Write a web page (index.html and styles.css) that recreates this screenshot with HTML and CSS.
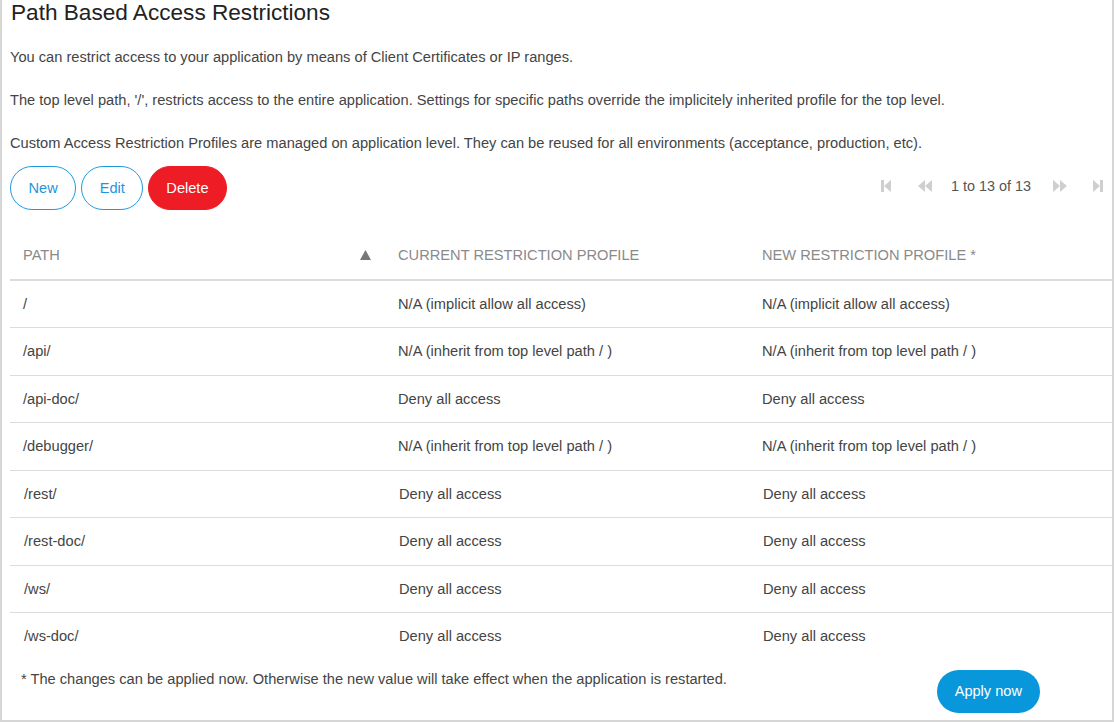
FILE: index.html
```html
<!DOCTYPE html>
<html>
<head>
<meta charset="utf-8">
<link rel="stylesheet" href="styles.css">
</head>
<body>
<div class="page">
  <h1 class="title">Path Based Access Restrictions</h1>
  <p class="text">You can restrict access to your application by means of Client Certificates or IP ranges.</p>
  <p class="text">The top level path, '/', restricts access to the entire application. Settings for specific paths override the implicitely inherited profile for the top level.</p>
  <p class="text">Custom Access Restriction Profiles are managed on application level. They can be reused for all environments (acceptance, production, etc).</p>
  <div class="toolbar">
    <div class="buttons">
      <button class="btn btn-outline">New</button>
      <button class="btn btn-outline">Edit</button>
      <button class="btn btn-danger">Delete</button>
    </div>
    <div class="pager">
      <svg class="pg pg-first" width="10" height="12" viewBox="0 0 10 12"><rect x="0" y="0" width="3" height="12"/><polygon points="10,0 10,12 3,6"/></svg>
      <svg class="pg pg-prev" width="14" height="12" viewBox="0 0 14 12"><polygon points="7,0 7,12 0,6"/><polygon points="14,0 14,12 7,6"/></svg>
      <span class="pg-text">1 to 13 of 13</span>
      <svg class="pg pg-next" width="14" height="12" viewBox="0 0 14 12"><polygon points="0,0 7,6 0,12"/><polygon points="7,0 14,6 7,12"/></svg>
      <svg class="pg pg-last" width="10" height="12" viewBox="0 0 10 12"><polygon points="0,0 7,6 0,12"/><rect x="7" y="0" width="3" height="12"/></svg>
    </div>
  </div>
  <table class="grid">
    <thead>
      <tr>
        <th class="c1"><div class="th-sort"><span>PATH</span><svg class="arrow" width="11" height="10" viewBox="0 0 11 10"><polygon points="5.5,0 11,10 0,10"/></svg></div></th>
        <th class="c2">CURRENT RESTRICTION PROFILE</th>
        <th class="c3">NEW RESTRICTION PROFILE *</th>
      </tr>
    </thead>
    <tbody>
      <tr><td class="c1">/</td><td class="c2">N/A (implicit allow all access)</td><td class="c3">N/A (implicit allow all access)</td></tr>
      <tr><td class="c1">/api/</td><td class="c2">N/A (inherit from top level path / )</td><td class="c3">N/A (inherit from top level path / )</td></tr>
      <tr><td class="c1">/api-doc/</td><td class="c2">Deny all access</td><td class="c3">Deny all access</td></tr>
      <tr><td class="c1">/debugger/</td><td class="c2">N/A (inherit from top level path / )</td><td class="c3">N/A (inherit from top level path / )</td></tr>
      <tr class="shift"><td class="c1">/rest/</td><td class="c2">Deny all access</td><td class="c3">Deny all access</td></tr>
      <tr class="shift"><td class="c1">/rest-doc/</td><td class="c2">Deny all access</td><td class="c3">Deny all access</td></tr>
      <tr class="shift"><td class="c1">/ws/</td><td class="c2">Deny all access</td><td class="c3">Deny all access</td></tr>
      <tr class="shift last"><td class="c1">/ws-doc/</td><td class="c2">Deny all access</td><td class="c3">Deny all access</td></tr>
    </tbody>
  </table>
  <div class="footer">
    <p class="note">* The changes can be applied now. Otherwise the new value will take effect when the application is restarted.</p>
    <button class="btn btn-primary">Apply now</button>
  </div>
</div>
</body>
</html>
```

FILE: styles.css
```css
html, body {
  margin: 0;
  padding: 0;
  background: #fff;
}
body {
  font-family: "Liberation Sans", Arial, sans-serif;
  color: #444;
}
.page {
  box-sizing: border-box;
  width: 1114px;
  height: 722px;
  border-left: 2px solid #d6d6d6;
  border-right: 2px solid #d6d6d6;
  border-bottom: 2px solid #d6d6d6;
  padding-left: 8px;
  overflow: hidden;
}
.title {
  margin: 0;
  font-size: 22.6px;
  line-height: 26px;
  font-weight: normal;
  color: #222;
  padding-left: 1px;
}
.text {
  margin: 23px 0 0 0;
  font-size: 14.65px;
  line-height: 16px;
  color: #444;
}
.text + .text {
  margin-top: 27px;
}
.toolbar {
  display: flex;
  align-items: center;
  justify-content: space-between;
  margin-top: 15px;
  height: 44px;
}
.buttons {
  display: flex;
  gap: 5px;
}
.btn {
  font-family: "Liberation Sans", Arial, sans-serif;
  font-size: 14.6px;
  height: 44px;
  border-radius: 22px;
  padding: 0 17px;
  cursor: pointer;
}
.btn-outline {
  background: #fff;
  border: 1px solid #1e9be0;
  color: #1e95dc;
  padding: 0 17.5px;
}
.btn-danger {
  background: #ee1c25;
  border: 1px solid #ee1c25;
  color: #fff;
  padding: 0 17px;
}
.pager {
  display: flex;
  align-items: center;
  padding-right: 9px;
  margin-top: -4px;
}
.pg {
  fill: #cfcfcf;
  display: block;
}
.pg-prev {
  margin-left: 27px;
}
.pg-text {
  margin-left: 19px;
  font-size: 14.4px;
  color: #555;
}
.pg-next {
  margin-left: 22px;
}
.pg-last {
  margin-left: 26px;
}
.grid {
  margin-top: 20px;
  width: 1103px;
  border-collapse: collapse;
  table-layout: fixed;
  font-size: 14.65px;
}
.grid th {
  height: 50px;
  padding: 0;
  text-align: left;
  font-weight: normal;
  color: #8a8a8a;
  border-bottom: 2px solid #dcdcdc;
}
.grid td {
  height: 47.5px;
  padding: 0;
  color: #444;
  border-bottom: 1px solid #dcdcdc;
}
.grid tr.last td {
  border-bottom: none;
  height: 47px;
}
.c1 {
  width: 375px;
  padding-left: 13px !important;
  box-sizing: border-box;
}
.c2 {
  width: 364px;
  padding-left: 13px !important;
  box-sizing: border-box;
}
.c3 {
  width: 364px;
  padding-left: 13px !important;
  box-sizing: border-box;
}
.grid tr.shift td {
  padding-left: 14px !important;
}
.th-sort {
  display: flex;
  justify-content: space-between;
  align-items: center;
  padding-right: 14px;
}
.arrow {
  display: block;
  fill: #777;
}
.footer {
  display: flex;
  justify-content: space-between;
  align-items: flex-start;
  margin-top: 10px;
  padding-right: 72px;
}
.note {
  margin: 1px 0 0 11px;
  font-size: 14.65px;
  line-height: 16px;
  color: #444;
}
.btn-primary {
  background: #0897db;
  border: none;
  color: #fff;
  height: 43px;
  padding: 0 18px;
}
```
